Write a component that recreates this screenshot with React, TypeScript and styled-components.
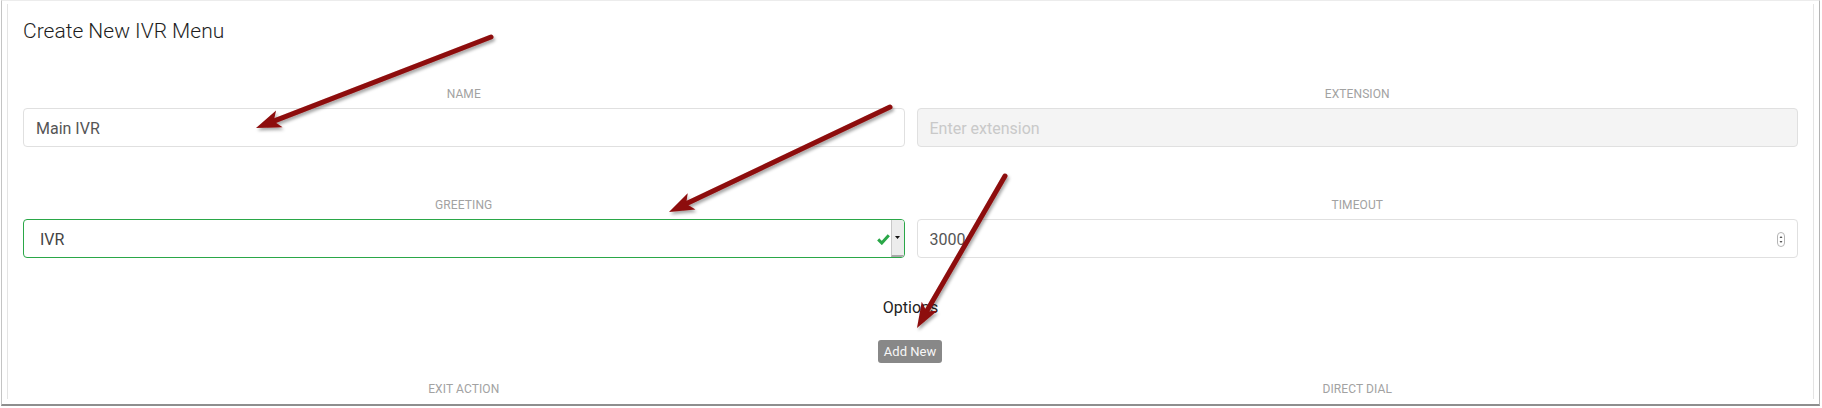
import React from "react";
import styled, { createGlobalStyle } from "styled-components";

const GlobalStyle = createGlobalStyle`
  html, body { margin: 0; padding: 0; background: #ffffff; }
  body { font-family: Roboto, "Liberation Sans", Arial, sans-serif; }
  * { box-sizing: border-box; }
`;

const Page = styled.div`
  position: relative;
  width: 1822px;
  height: 408px;
  overflow: hidden;
`;

const Frame = styled.div`
  margin-left: 1px;
  width: 1819px;
  height: 406px;
  border-top: 1px solid #ececec;
  border-left: 1px solid #c4c4c4;
  border-right: 1px solid #b4b4b4;
  border-bottom: 2px solid #8e8e8e;
  padding: 3px 5px 5px;
`;

const Panel = styled.div`
  height: 395px;
  overflow: hidden;
  border-left: 1px solid #e4e4e4;
  border-right: 1px solid #e4e4e4;
  padding: 15px 15px 0;
  display: flex;
  flex-direction: column;
`;

const Title = styled.h3`
  margin: 0;
  font-size: 21px;
  line-height: 25px;
  font-weight: 300;
  color: #1e1e1e;
`;

const FieldRow = styled.div<{ $top: number }>`
  margin-top: ${(p) => p.$top}px;
  display: grid;
  grid-template-columns: 1fr 1fr;
  column-gap: 12px;
`;

const Field = styled.div`
  display: flex;
  flex-direction: column;
  gap: 7px;
`;

const Label = styled.div`
  text-align: center;
  font-size: 12px;
  line-height: 14px;
  letter-spacing: 0.1px;
  color: #a2a2a2;
  text-transform: uppercase;
`;

const Control = styled.div<{ $disabled?: boolean; $valid?: boolean }>`
  height: 39px;
  display: flex;
  align-items: stretch;
  border: 1px solid ${(p) => (p.$valid ? "#2aa748" : "#e0e0e0")};
  border-radius: 4px;
  background: ${(p) => (p.$disabled ? "#f4f4f4" : "#ffffff")};
  overflow: hidden;
`;

const ControlInput = styled.input<{ $indent?: number; $tone?: string }>`
  flex: 1;
  min-width: 0;
  border: none;
  outline: none;
  background: transparent;
  font-family: Roboto, "Liberation Sans", Arial, sans-serif;
  font-size: 16px;
  color: ${(p) => p.$tone ?? "#555555"};
  padding: 2px 0 0 ${(p) => p.$indent ?? 12}px;
  margin: 0;
  &::placeholder { color: #c9c9c9; }
  &:disabled { color: #c9c9c9; }
`;

const Adornment = styled.div<{ $right: number }>`
  display: flex;
  align-items: center;
  padding-top: 2px;
  padding-right: ${(p) => p.$right}px;
`;

const DropButton = styled.div`
  width: 13px;
  display: flex;
  align-items: center;
  justify-content: center;
  background: #ececec;
  border-left: 1px solid #c8c8c8;
  border-bottom: 2px solid #a8a8a8;
`;

const OptionsHeading = styled.div`
  margin-top: 40px;
  text-align: center;
  font-size: 16px;
  line-height: 20px;
  color: #222222;
`;

const ButtonRow = styled.div`
  margin-top: 22px;
  display: flex;
  justify-content: center;
`;

const AddButton = styled.button`
  height: 23px;
  padding: 0 6px;
  border: none;
  border-radius: 3px;
  background: #888888;
  color: #f7f7f7;
  font-family: Roboto, "Liberation Sans", Arial, sans-serif;
  font-size: 13px;
  line-height: 23px;
  margin-left: -1px;
`;

const Overlay = styled.svg`
  position: absolute;
  left: 0;
  top: 0;
  pointer-events: none;
`;

type ArrowProps = { x1: number; y1: number; x2: number; y2: number };

function Arrow({ x1, y1, x2, y2 }: ArrowProps) {
  const dx = x2 - x1;
  const dy = y2 - y1;
  const len = Math.hypot(dx, dy);
  const ux = dx / len;
  const uy = dy / len;
  const px = -uy;
  const py = ux;
  const head = 25;
  const half = 9;
  const notch = 19;
  const bx = x2 - ux * head;
  const by = y2 - uy * head;
  const nx = x2 - ux * notch;
  const ny = y2 - uy * notch;
  const pts = [
    [x2, y2],
    [bx + px * half, by + py * half],
    [nx, ny],
    [bx - px * half, by - py * half],
  ]
    .map((q) => q.join(","))
    .join(" ");
  return (
    <g filter="url(#arrowShadow)">
      <line x1={x1} y1={y1} x2={nx} y2={ny} stroke="#8d0a0a" strokeWidth={5} strokeLinecap="round" />
      <polygon points={pts} fill="#8d0a0a" />
    </g>
  );
}

function Check() {
  return (
    <svg width="13" height="11" viewBox="0 0 13 11">
      <path d="M1.2 5.4 L4.8 9 L11.8 1.2" fill="none" stroke="#2aa748" strokeWidth="3" strokeLinejoin="miter" />
    </svg>
  );
}

function Caret() {
  return (
    <svg width="5" height="3" viewBox="0 0 5 3">
      <path d="M0 0 H5 L2.5 3 Z" fill="#111" />
    </svg>
  );
}

function Spinner() {
  return (
    <svg width="8" height="15" viewBox="0 0 8 15">
      <rect x="0.5" y="0.5" width="7" height="14" rx="3.5" fill="#fff" stroke="#b5b5b5" />
      <path d="M2.5 6 L4 4 L5.5 6 Z" fill="#555" />
      <path d="M2.5 9 L4 11 L5.5 9 Z" fill="#555" />
    </svg>
  );
}

export default function App() {
  return (
    <Page>
      <GlobalStyle />
      <Frame>
        <Panel>
          <Title>Create New IVR Menu</Title>
          <FieldRow $top={43}>
            <Field>
              <Label>Name</Label>
              <Control>
                <ControlInput readOnly value="Main IVR" />
              </Control>
            </Field>
            <Field>
              <Label>Extension</Label>
              <Control $disabled>
                <ControlInput disabled placeholder="Enter extension" />
              </Control>
            </Field>
          </FieldRow>
          <FieldRow $top={51}>
            <Field>
              <Label>Greeting</Label>
              <Control $valid>
                <ControlInput readOnly value="IVR" $indent={16} $tone="#444444" />
                <Adornment $right={1}>
                  <Check />
                </Adornment>
                <DropButton>
                  <Caret />
                </DropButton>
              </Control>
            </Field>
            <Field>
              <Label>Timeout</Label>
              <Control>
                <ControlInput readOnly value="3000" />
                <Adornment $right={12}>
                  <Spinner />
                </Adornment>
              </Control>
            </Field>
          </FieldRow>
          <OptionsHeading>Options</OptionsHeading>
          <ButtonRow>
            <AddButton type="button">Add New</AddButton>
          </ButtonRow>
          <FieldRow $top={19}>
            <Label>Exit Action</Label>
            <Label>Direct Dial</Label>
          </FieldRow>
        </Panel>
      </Frame>
      <Overlay width="1822" height="408" viewBox="0 0 1822 408">
        <defs>
          <filter id="arrowShadow" x="-20%" y="-20%" width="140%" height="140%">
            <feDropShadow dx="1.5" dy="2.5" stdDeviation="1.8" floodColor="#000" floodOpacity="0.35" />
          </filter>
        </defs>
        <Arrow x1={491} y1={37} x2={256} y2={128} />
        <Arrow x1={890} y1={107} x2={669} y2={212} />
        <Arrow x1={1005} y1={176} x2={917} y2={328} />
      </Overlay>
    </Page>
  );
}
